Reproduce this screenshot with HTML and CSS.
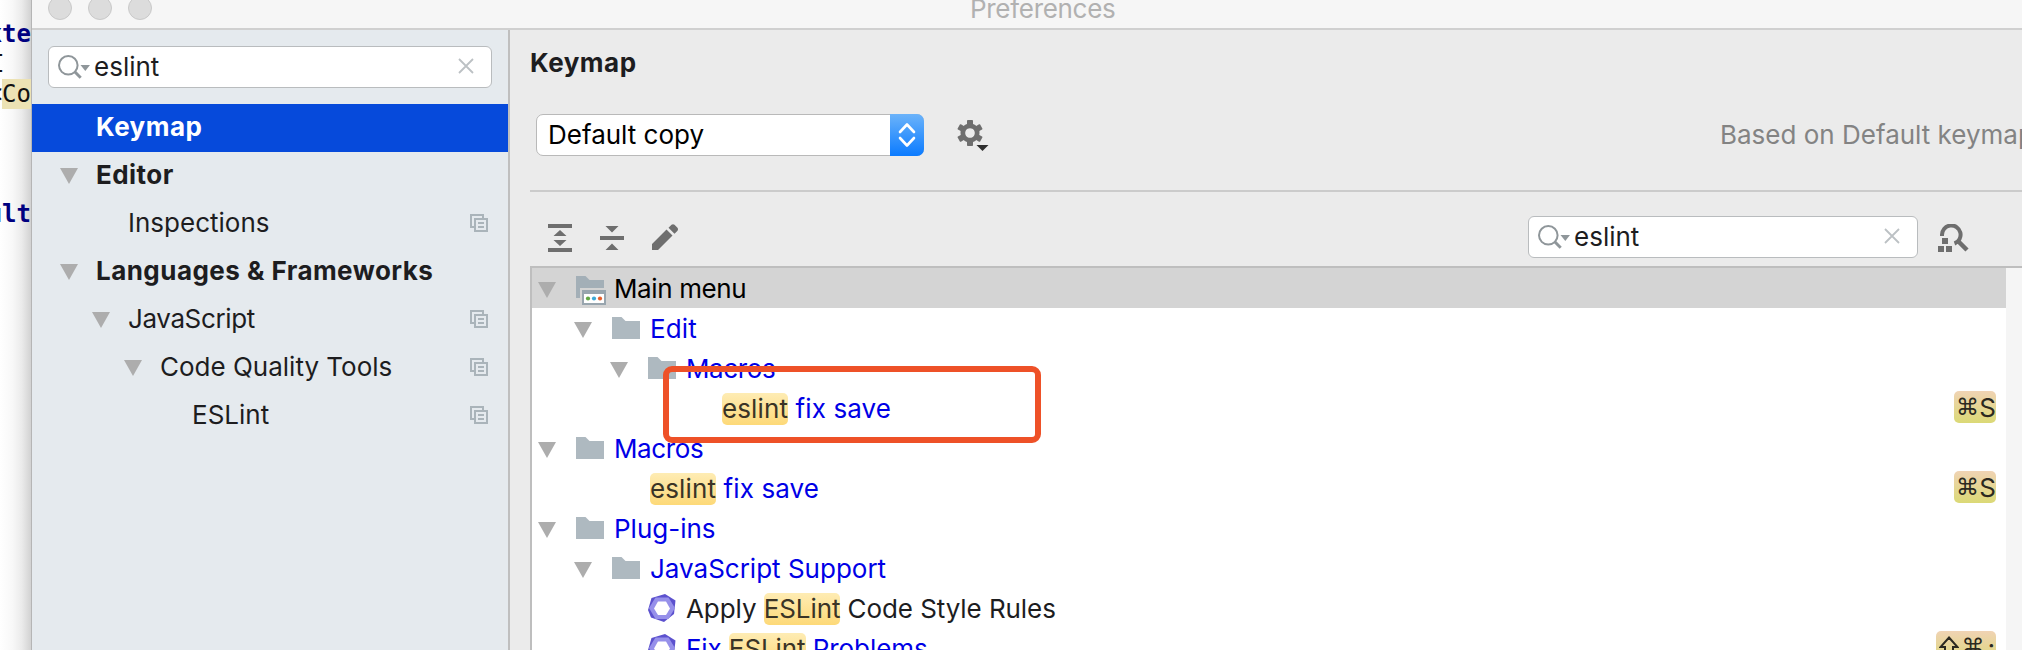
FILE: index.html
```html
<!DOCTYPE html>
<html lang="en">
<head>
<meta charset="utf-8">
<title>Preferences</title>
<link rel="stylesheet" href="styles.css">
</head>
<body>
<svg width="0" height="0" class="defs">
  <defs>
    <symbol id="folder" viewBox="0 0 28 22"><path d="M0 0h9.500l4 4H28v18H0z" fill="#aeb9c0"/></symbol>
    <symbol id="tri" viewBox="0 0 18 16"><path d="M0 0h18L9 16z" fill="#adadad"/></symbol>
    <symbol id="copy" viewBox="0 0 18 18"><path d="M4 13H1V1h12v3M5 5h12v12H5zM8 9h6M8 13h6" fill="none" stroke="#aab4ba" stroke-width="2"/></symbol>
    <symbol id="search" viewBox="0 0 32 24"><circle cx="10.300" cy="10.300" r="9.300" fill="none" stroke="#8f969a" stroke-width="2"/><path d="M16.500 16.500l6.200 6.200" stroke="#8f969a" stroke-width="3"/><path d="M22.500 10h9.500l-4.700 6z" fill="#8f969a"/></symbol>
    <symbol id="clear" viewBox="0 0 16 16"><path d="M1 1l14 14M15 1L1 15" stroke="#bcc1c4" stroke-width="1.800"/></symbol>
    <symbol id="hex" viewBox="0 0 28 28"><path d="M17 0l10.500 6.500L26 20l-10 8L3 23.500 0 16 3.500 4z" fill="#5c51ce"/><path d="M7.500 3.500L20.500 3.500 27 14 20.500 25 7.500 25 1 14z" fill="#9690ea"/><path d="M10 7.500h8l4 7-4 6.500h-8l-4-6.500z" fill="#fff"/></symbol>
  </defs>
</svg>
<div class="screen">
  <div class="code">
    <div class="line kw l1"><span>xte</span></div>
    <div class="line l2"><span>I</span></div>
    <div class="line l3"><span>&lt;<mark>Co</mark></span></div>
    <div class="line kw l4"><span>ult</span></div>
  </div>
  <div class="window">
    <header class="titlebar">
      <div class="lights"><i></i><i></i><i></i></div>
      <span class="title">Preferences</span>
    </header>
    <div class="body">
      <aside class="sidebar">
        <div class="field side-search"><svg class="mag"><use href="#search"/></svg><span class="q">eslint</span><svg class="x"><use href="#clear"/></svg></div>
        <div class="nav">
          <div class="item top selected"><span>Keymap</span></div>
          <div class="item top"><svg class="tri"><use href="#tri"/></svg><span>Editor</span></div>
          <div class="item n1"><span>Inspections</span><svg class="copy"><use href="#copy"/></svg></div>
          <div class="item top"><svg class="tri"><use href="#tri"/></svg><span>Languages &amp; Frameworks</span></div>
          <div class="item n1"><svg class="tri"><use href="#tri"/></svg><span class="tight">JavaScript</span><svg class="copy"><use href="#copy"/></svg></div>
          <div class="item n2"><svg class="tri"><use href="#tri"/></svg><span>Code Quality Tools</span><svg class="copy"><use href="#copy"/></svg></div>
          <div class="item n3"><span>ESLint</span><svg class="copy"><use href="#copy"/></svg></div>
        </div>
      </aside>
      <main class="content">
        <h1>Keymap</h1>
        <div class="scheme">
          <div class="select"><span>Default copy</span><b><svg width="18" height="26" viewBox="0 0 18 26"><path d="M2 10l7-7.500L16 10M2 16l7 7.500L16 16" fill="none" stroke="#fff" stroke-width="2.600" stroke-linecap="round" stroke-linejoin="round"/></svg></b></div>
          <svg class="gear" width="32" height="32" viewBox="0 0 32 32"><g fill="#6e6e6e"><path fill-rule="evenodd" d="M13 3.500a9.500 9.500 0 1 0 .01 0zM13 8.200a4.800 4.800 0 1 1-.01 0z"/><path id="tooth" d="M10 0.800q0-.8.8-.8h4.400q.8 0 .8.800V5h-6z"/><use href="#tooth" transform="rotate(60 13 13)"/><use href="#tooth" transform="rotate(120 13 13)"/><use href="#tooth" transform="rotate(180 13 13)"/><use href="#tooth" transform="rotate(240 13 13)"/><use href="#tooth" transform="rotate(300 13 13)"/></g><path d="M19.500 25h12l-6 6z" fill="#2e2e2e"/></svg>
          <span class="based">Based on Default keymap</span>
        </div>
        <div class="tools">
          <svg width="24" height="28" viewBox="0 0 24 28"><path d="M0 0h24v4H0zM0 24h24v4H0zM5.500 12L12 6l6.500 6zM5.500 16h13L12 22z" fill="#6e6e6e"/></svg>
          <svg width="24" height="28" viewBox="0 0 24 28"><path d="M0 12h24v4H0zM5.500 2h13L12 8.500zM5.500 26L12 19.500l6.500 6.500z" fill="#6e6e6e"/></svg>
          <svg width="26" height="28" viewBox="0 0 26 28"><path d="M0 20L14.500 5.500l6 6L6 26H0zM16.500 3.800l3-3q1.500-1.200 3 0l3 3q1 1.500 0 3l-3 3z" fill="#6e6e6e"/></svg>
          <div class="field tree-search"><svg class="mag"><use href="#search"/></svg><span class="q">eslint</span><svg class="x"><use href="#clear"/></svg></div>
          <svg class="find" width="31" height="28" viewBox="0 0 31 28"><path d="M4 12v-1A9.300 9.300 0 1 1 16.500 19.500" fill="none" stroke="#6e6e6e" stroke-width="4"/><path d="M20 17l9 9" stroke="#6e6e6e" stroke-width="4.500"/><path d="M4 14h6v6H4zM0 22h6v6H0zM8 22h6v6H8z" fill="#6e6e6e"/></svg>
        </div>
        <div class="tree-wrap">
          <div class="tree">
            <div class="row d0 current"><svg class="tri"><use href="#tri"/></svg><svg class="menu-folder" viewBox="0 0 30 29"><path d="M0 0h9.500l4 4H28v8H4v10H0z" fill="#a3afb7"/><path d="M6 14h24v15H6z" fill="#98a5ae"/><path d="M8 18h20v9H8z" fill="#fff"/><circle cx="12" cy="22.500" r="2.100" fill="#62a744"/><circle cx="18" cy="22.500" r="2.100" fill="#3fa9d6"/><circle cx="24" cy="22.500" r="2.100" fill="#e5602e"/></svg><span class="tight">Main menu</span></div>
            <div class="row d1"><svg class="tri"><use href="#tri"/></svg><svg class="folder"><use href="#folder"/></svg><span class="wide">Edit</span></div>
            <div class="row d2"><svg class="tri"><use href="#tri"/></svg><svg class="folder"><use href="#folder"/></svg><span class="tight">Macros</span></div>
            <div class="row leaf3"><span class="wide"><em>eslint</em> fix save</span><kbd><i>⌘</i>S</kbd></div>
            <div class="row d0"><svg class="tri"><use href="#tri"/></svg><svg class="folder"><use href="#folder"/></svg><span class="tight">Macros</span></div>
            <div class="row leaf1"><span class="wide"><em>eslint</em> fix save</span><kbd><i>⌘</i>S</kbd></div>
            <div class="row d0"><svg class="tri"><use href="#tri"/></svg><svg class="folder"><use href="#folder"/></svg><span>Plug-ins</span></div>
            <div class="row d1"><svg class="tri"><use href="#tri"/></svg><svg class="folder"><use href="#folder"/></svg><span>JavaScript Support</span></div>
            <div class="row act plain"><svg class="hex"><use href="#hex"/></svg><span class="snug">Apply <em>ESLint</em> Code Style Rules</span></div>
            <div class="row act"><svg class="hex"><use href="#hex"/></svg><span class="snug">Fix <em>ESLint</em> Problems</span><kbd class="triple"><svg width="20" height="22" viewBox="0 0 20 22"><path d="M10 1.500L18.500 11H14v9H6v-9H1.500z" fill="none" stroke="#2b2920" stroke-width="2"/></svg><i>⌘</i>;</kbd></div>
          </div>
        </div>
      </main>
    </div>
  </div>
  <div class="callout"></div>
</div>
</body>
</html>
```
FILE: styles.css
```css
* { box-sizing: border-box; }
body { margin: 0; font: 26px/32px Inter, "Liberation Sans", sans-serif; color: #1d1d1f; }
svg { display: block; flex: none; }
i, em { font-style: normal; }
.defs { position: absolute; }
.screen { position: relative; display: flex; width: 2022px; height: 650px; overflow: hidden; background: #fff; }
.code { width: 32px; flex: none; font: 24px/30px "DejaVu Sans Mono", monospace; color: #111; padding-top: 19px; border-right: 1px solid #b5b5b5;
  background: linear-gradient(90deg, #fff 0, #f8f8f8 40%, #ebebeb 70%, #d2d2d2 100%); }
.line { display: flex; justify-content: flex-end; height: 30px; overflow: hidden; white-space: pre; }
.line span { flex: none; }
.kw { color: #000080; font-weight: bold; }
.l2 { justify-content: flex-start; }
.l2 span { margin-left: -10px; }
.line mark { background: #ece2b4; color: inherit; display: inline-block; }
.l4 { margin-top: 90px; }
.window { width: 1990px; flex: none; background: #ebebeb; display: flex; flex-direction: column; }
.titlebar { height: 30px; flex: none; background: #f6f6f6; border-bottom: 2px solid #d0d0d0; display: flex; align-items: flex-start; overflow: hidden; }
.lights { display: flex; gap: 16px; margin: -4px 0 0 16px; width: 922px; }
.lights i { width: 24px; height: 24px; border-radius: 50%; background: #dcdcdc; border: 1px solid #c9c9c9; }
.title { color: #b1b1b1; margin-top: -7px; letter-spacing: -.3px; }
.body { display: flex; flex: 1; min-height: 0; }
.sidebar { width: 478px; flex: none; background: #e5eaee; border-right: 2px solid #bfbfbf; padding-top: 16px; }
.field { display: flex; align-items: center; height: 42px; background: #fff; border: 1px solid #b9bcbe; border-radius: 6px; padding: 0 17px 0 9px; }
.side-search { width: 444px; margin-left: 16px; }
.mag { width: 32px; height: 24px; margin-right: 4px; }
.x { width: 16px; height: 16px; margin-left: auto; margin-top: -2px; }
.nav { margin-top: 16px; }
.item { display: flex; align-items: center; height: 48px; padding-right: 20px; white-space: nowrap; }
.item > span { margin-top: -2px; }
.item .tri { width: 18px; height: 16px; margin-right: 18px; }
.item .copy { width: 18px; height: 18px; margin: -2px 0 0 auto; }
.top { font-weight: 700; padding-left: 28px; letter-spacing: .46px; }
.top > span:first-child { margin-left: 36px; }
.n1 { padding-left: 60px; }
.n1 > span:first-child, .n3 > span:first-child { margin-left: 36px; }
.n2 { padding-left: 92px; }
.n3 { padding-left: 124px; }
.selected { background: #064adb; color: #fff; }
.content { flex: 1; min-width: 0; padding-left: 20px; display: flex; flex-direction: column; }
h1 { font-size: 26px; line-height: 32px; margin: 17px 0 0; letter-spacing: .5px; }
.scheme { display: flex; align-items: center; height: 42px; margin: 35px 0 34px 6px; white-space: nowrap; }
.select { width: 388px; height: 42px; flex: none; background: #fff; border: 1px solid #b9b9b9; border-radius: 7px; display: flex; align-items: center; justify-content: space-between; padding-left: 11px; color: #000; }
.select b { width: 34px; height: 42px; margin-right: -1px; border-radius: 0 7px 7px 0; background: linear-gradient(#6bb3fa, #0b7bff); display: flex; align-items: center; justify-content: center; }
.gear { margin: 2px 0 0 33px; }
.based { margin-left: 731px; color: #838383; }
.tools { border-top: 2px solid #cbcbcb; height: 76px; flex: none; display: flex; align-items: center; padding: 18px 0 2px 18px; gap: 28px; }
.tools > svg { margin-top: 2px; }
.tree-search { width: 390px; margin: 0 0 0 822px; }
.tools .find { margin-left: -8px; }
.tree-wrap { flex: 1; min-height: 0; overflow: hidden; border: solid #bebebe; border-width: 2px 0 0 2px; background: #f5f5f5; }
.tree { width: 1474px; background: #fff; }
.row { display: flex; align-items: center; height: 40px; color: #0000e6; white-space: nowrap; }
.row > span { margin-top: 2px; }
.row .tri { width: 18px; height: 16px; margin: 3px 20px 0 0; }
.folder { width: 28px; height: 22px; margin: -1px 10px 0 0; }
.menu-folder { width: 30px; height: 29px; margin: 4px 8px 0 0; }
.tight { letter-spacing: -.38px; }
.snug { letter-spacing: -.08px; }
.wide { letter-spacing: .12px; }
.current { background: #d4d4d4; color: #000; }
.plain { color: #1d1d1f; }
.d0 { padding-left: 6px; }
.d1 { padding-left: 42px; }
.d2 { padding-left: 78px; }
.leaf1 { padding-left: 118px; }
.leaf3 { padding-left: 190px; }
.act { padding-left: 116px; }
.hex { width: 28px; height: 28px; margin-right: 10px; }
.row em { display: inline-block; height: 32px; border-radius: 5px; background: linear-gradient(#feecb4, #fdd978); color: #3a3426; }
.row kbd { font: inherit; line-height: 33px; color: #2b2920; margin: -3px 10px 0 auto; width: 42px; height: 32px; border-radius: 5px; background: linear-gradient(#f0d3b4, #dbd976); display: flex; justify-content: space-between; padding: 0 0 0 2px; }
.row kbd i { font-family: "DejaVu Sans", sans-serif; font-size: 23px; }
.row kbd.triple { width: 60px; padding: 0 1px 0 3px; }
.triple svg { margin-top: 5px; }
.callout { position: absolute; left: 663px; top: 366px; width: 378px; height: 77px; border: 6px solid #ee5128; border-radius: 9px; }
```
